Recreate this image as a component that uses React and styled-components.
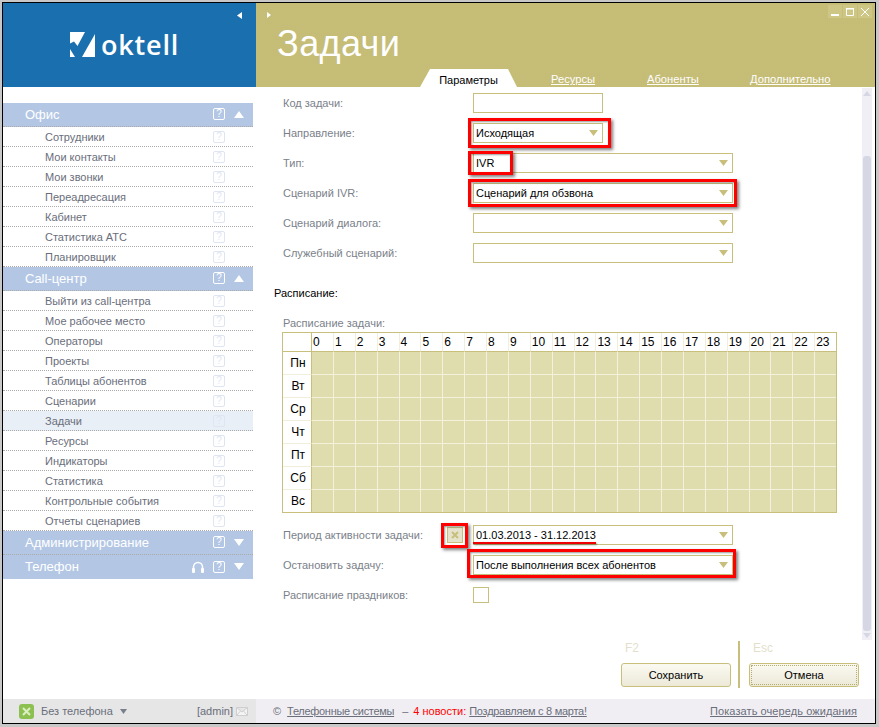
import React from "react";
import styled, { createGlobalStyle } from "styled-components";

const Global = createGlobalStyle`
  html, body { margin: 0; padding: 0; background: #c8c8c8; }
  body { font-family: "Liberation Sans", Arial, sans-serif; font-size: 11px; }
`;
const Frame = styled.div`
  width: 879px; height: 727px; box-sizing: border-box; padding: 2px 3px 3px 2px; overflow: hidden;
`;
const Win = styled.div`
  width: 874px; height: 722px; box-sizing: border-box; border: 1px solid #000; background: #fff;
  display: grid; grid-template-columns: 253px 1fr; grid-template-rows: 84px 1fr 24px;
`;
const Brand = styled.div`
  background: #1a6fae; position: relative; display: flex; align-items: center; padding: 0 0 2px 67px; box-sizing: border-box;
`;
const LogoText = styled.span`
  color: #fff; font: 600 27px "Open Sans", "Liberation Sans", sans-serif; letter-spacing: 0.8px; margin-left: 6px; line-height: 1;
`;
const Collapse = styled.svg`
  position: absolute; right: 14px; top: 9px;
`;
const Head = styled.div`
  background: #c5bc75; position: relative; padding-left: 21px;
  background-image: linear-gradient(45deg, rgba(255,255,255,.03) 25%, transparent 25%);
  background-size: 2px 2px;
`;
const Title = styled.div`
  color: #fff; font-size: 36px; line-height: 40px; padding-top: 21px; letter-spacing: .4px;
`;
const ExpandIcon = styled.svg`
  position: absolute; left: 11px; top: 9px;
`;
const WinBtns = styled.div`
  position: absolute; right: 3px; top: 2px; display: flex; gap: 1px;
`;
const WinBtn = styled.div`
  width: 14px; height: 13px; background: #cec684; display: flex; align-items: center; justify-content: center;
`;
const Tabs = styled.div`
  position: absolute; left: 0; right: 0; bottom: 0; height: 18px;
`;
const ActiveTab = styled.div`
  position: absolute; left: 164px; bottom: 0; width: 97px; height: 18px;
  background: #fff; clip-path: polygon(10px 0, 88px 0, 97px 100%, 0 100%);
  display: flex; align-items: center; justify-content: center; font-size: 11px; color: #000; padding-top: 3px; box-sizing: border-box;
`;
const TabLink = styled.a`
  position: absolute; left: ${p => p.$x}px; bottom: 0; color: #fff; font-size: 11.2px; text-decoration: underline; line-height: 15px;
`;
const Side = styled.div`
  padding: 16px 3px 0 0; background: #fff;
`;
const Section = styled.div`
  height: 24px; background: #b3c7e5; border-bottom: 1px dotted #aaa; box-sizing: border-box; color: #fff; font-size: 13px;
  display: flex; align-items: center; padding: 0 9px 1px 22px;
  & > span:first-child { flex: 1; }
  &:last-child { border-bottom: 0; }
`;
const Icons = styled.div`
  display: flex; align-items: center; gap: 9px;
`;
const Help = styled.span`
  width: 10px; height: 10px; border: 1px solid ${p => p.$light ? "#dfe6f3" : "#fff"}; border-radius: 2px;
  font-size: 10px; line-height: 10px; text-align: center;
  color: ${p => p.$light ? "#dfe6f3" : "#fff"}; display: inline-block; box-sizing: content-box; flex: none;
`;
const Tri = styled.svg`
  display: block;
`;
const Item = styled.div`
  height: 20px; box-sizing: border-box; border-bottom: 1px dotted #aaa;
  display: flex; align-items: center; justify-content: space-between; padding: 0 28px 0 42px;
  color: #6a6e7b; background: ${p => p.$active ? "#e9eff7" : "#fff"};
`;
const Main = styled.div`
  display: grid; grid-template-columns: 1fr 13px; min-height: 0; background: #fff; padding-left: 3px;
`;
const Form = styled.div`
  padding: 6px 0 0 15px; position: relative;
`;
const Row = styled.div`
  display: flex; align-items: center; height: 20px; margin-bottom: 10px; color: #7b7f8a; padding-left: 9px;
`;
const Label = styled.div`
  width: 190px; flex: none;
`;
const FieldWrap = styled.div`
  position: relative; flex: none; width: ${p => p.$w}px;
`;
const Input = styled.div`
  box-sizing: border-box; height: 20px; border: 1px solid #c8bf7c; background: #fff; width: 100%; color: #000;
  padding-left: 2px; line-height: 18px; position: relative; font-size: 11px;
`;
const Arrow = styled.svg`
  position: absolute; right: 4px; top: 6px;
`;
const Mark = styled.div`
  position: absolute; left: ${p => p.$l}px; top: ${p => p.$t}px; width: ${p => p.$w}px; height: ${p => p.$h}px;
  border: 3px solid #f00; box-sizing: border-box; pointer-events: none;
  box-shadow: 2px 2px 3px rgba(0,0,0,.5), inset 1px 1px 2px rgba(0,0,0,.4);
`;
const Underline = styled.div`
  position: absolute; left: -1px; top: 16px; width: 123px; height: 2px; background: #e00; box-shadow: 1px 1px 2px rgba(0,0,0,.4);
`;
const Heading = styled.div`
  color: #000; margin: 23px 0 0 0; height: 15px; line-height: 15px;
`;
const SubLabel = styled.div`
  color: #7b7f8a; margin: 15px 0 1px 9px; height: 15px; line-height: 15px;
`;
const Grid = styled.div`
  margin-left: 8px; width: 555px; height: 181px; box-sizing: border-box; border: 1px solid #c8bf7c;
  display: grid; grid-template-columns: 29px repeat(24, 21.875px); grid-template-rows: 19px repeat(7, 23px); background: #fff; overflow: hidden;
`;
const Corner = styled.div`
  border-right: 1px solid #c8bf7c; border-bottom: 1px solid #c8bf7c;
`;
const Hour = styled.div`
  border-bottom: 1px solid #c8bf7c; border-right: 1px solid #f1efdb; padding-left: 1px; color: #000; font-size: 12px; line-height: 18px; white-space: nowrap; box-sizing: border-box;
`;
const Day = styled.div`
  border-right: 1px solid #c8bf7c; border-bottom: 1px solid #f1efdb; display: flex; align-items: center; justify-content: center; color: #000; font-size: 12px; padding-left: 2px; box-sizing: border-box;
`;
const Cell = styled.div`
  background: #dfdcae; border-right: 1px solid #f3f1dc; border-bottom: 1px solid #f3f1dc; box-sizing: border-box;
`;
const Gap = styled.div`
  height: 12px;
`;
const Check = styled.div`
  width: 16px; height: 16px; border: 1px solid #c8bf7c; box-sizing: border-box; background: #fff; position: relative;
  display: flex; align-items: center; justify-content: center;
`;
const CheckOn = styled(Check)`
  position: absolute; left: -26px; top: 2px; background: #e6e3cc; color: #c8bf7c;
`;
const Foot = styled.div`
  position: absolute; left: 0; right: 0; top: 554px; height: 50px;
`;
const Hotkey = styled.div`
  position: absolute; left: ${p => p.$x}px; top: 0; color: #e4dfcd; font-size: 12px;
`;
const Btn = styled.button`
  position: absolute; left: ${p => p.$x}px; top: 22px; width: 110px; height: 24px; border: 1px solid #c8bf7c; border-radius: 3px;
  background: linear-gradient(#fbfaf2, #ece9d8); color: #000; font: 11px "Liberation Sans", sans-serif; padding: 0;
  outline: ${p => p.$focus ? "1px dotted #b5ad6d" : "none"}; outline-offset: -3px;
`;
const Divider = styled.div`
  position: absolute; left: 479px; top: 0; width: 2px; height: 47px; background: #c8bf7c;
`;
const Scroll = styled.div`
  background: #f0eff5; width: 10px; position: relative; margin-top: 1px; margin-bottom: 59px;
`;
const Thumb = styled.div`
  position: absolute; left: 1px; right: 1px; top: 68px; bottom: 9px; background: #d5d8e4; border-radius: 3px;
`;
const ScrollBtn = styled.svg`
  position: absolute; left: 1px; ${p => p.$top ? "top: 3px" : "bottom: 2px"};
`;
const StatusL = styled.div`
  background: #e6e6e6; display: flex; align-items: center; padding: 0 8px 0 16px; color: #6a6e7b;
`;
const Green = styled.div`
  width: 15px; height: 15px; border-radius: 3px; background: #8cc152; color: #fff; display: flex; align-items: center; justify-content: center; margin-right: 7px;
`;
const Spacer = styled.div`
  flex: 1;
`;
const StatusR = styled.div`
  background: #f1eef3; display: flex; align-items: center; padding: 0 18px 0 17px; color: #6a6e7b;
`;
const FootLink = styled.a`
  color: #6a6e7b; text-decoration: underline; letter-spacing: ${p => p.$ls ?? 0}px; margin-right: ${p => p.$m ?? 0}px;
`;
const Copy = styled.span`
  margin-right: 6px;
`;
const Dash = styled.span`
  margin-right: 5px;
`;
const News = styled.span`
  color: #f00; margin-right: 3px;
`;
const StatusArrow = styled.svg`
  margin-left: 7px;
`;
const Mail = styled.svg`
  margin-left: 3px;
`;

const Q = ({ light }) => <Help $light={light}>?</Help>;
const TriUp = () => <Tri width="10" height="7" viewBox="0 0 10 7"><path d="M5 0L10 7H0z" fill="#fff" /></Tri>;
const TriDown = () => <Tri width="10" height="7" viewBox="0 0 10 7"><path d="M0 0h10L5 7z" fill="#fff" /></Tri>;
const Dd = () => <Arrow width="9" height="6" viewBox="0 0 9 6"><path d="M0 0h9L4.5 6z" fill="#c8bf7c" /></Arrow>;

const office = ["Сотрудники", "Мои контакты", "Мои звонки", "Переадресация", "Кабинет", "Статистика АТС", "Планировщик"];
const cc = ["Выйти из call-центра", "Мое рабочее место", "Операторы", "Проекты", "Таблицы абонентов", "Сценарии", "Задачи", "Ресурсы", "Индикаторы", "Статистика", "Контрольные события", "Отчеты сценариев"];
const days = ["Пн", "Вт", "Ср", "Чт", "Пт", "Сб", "Вс"];
const hours = Array.from({ length: 24 }, (_, i) => i);

export default function App() {
  return (
    <Frame>
      <Global />
      <Win>
        <Brand>
          <svg width="25" height="25" viewBox="0 0 25 25">
            <path d="M0 0H15L7.5 14L4 9.5L0 11.5z" fill="#fff" />
            <path d="M25 2V25H12z" fill="#fff" />
            <path d="M0 17V25H5z" fill="#fff" />
          </svg>
          <LogoText>oktell</LogoText>
          <Collapse width="5" height="7" viewBox="0 0 5 7"><path d="M5 0V7L0 3.5z" fill="#fff" /></Collapse>
        </Brand>
        <Head>
          <ExpandIcon width="4" height="6" viewBox="0 0 4 6"><path d="M0 0V6L4 3z" fill="#fff" /></ExpandIcon>
          <WinBtns>
            <WinBtn><svg width="8" height="8" viewBox="0 0 8 8"><path d="M0 6h8v2H0z" fill="#fff" /></svg></WinBtn>
            <WinBtn><svg width="8" height="8" viewBox="0 0 8 8"><path d="M.5.5h7v7h-7z" fill="none" stroke="#fff" /><path d="M0 0h8v1.5H0z" fill="#fff" /></svg></WinBtn>
            <WinBtn><svg width="8" height="8" viewBox="0 0 8 8"><path d="M0 0L8 8M8 0L0 8" stroke="#fff" fill="none" /></svg></WinBtn>
          </WinBtns>
          <Title>Задачи</Title>
          <Tabs>
            <ActiveTab>Параметры</ActiveTab>
            <TabLink $x={295}>Ресурсы</TabLink>
            <TabLink $x={391}>Абоненты</TabLink>
            <TabLink $x={494}>Дополнительно</TabLink>
          </Tabs>
        </Head>
        <Side>
          <Section><span>Офис</span><Icons><Q /><TriUp /></Icons></Section>
          {office.map(t => <Item key={t}>{t}<Q light /></Item>)}
          <Section><span>Call-центр</span><Icons><Q /><TriUp /></Icons></Section>
          {cc.map(t => <Item key={t} $active={t === "Задачи"}>{t}<Q light /></Item>)}
          <Section><span>Администрирование</span><Icons><Q /><TriDown /></Icons></Section>
          <Section>
            <span>Телефон</span>
            <Icons>
              <svg width="12" height="12" viewBox="0 0 12 12"><path d="M1.5 8V6a4.5 4.5 0 0 1 9 0v2" fill="none" stroke="#fff" strokeWidth="1.5" /><rect x="0" y="7" width="3" height="5" rx="1" fill="#fff" /><rect x="9" y="7" width="3" height="5" rx="1" fill="#fff" /></svg>
              <Q /><TriDown />
            </Icons>
          </Section>
        </Side>
        <Main>
          <Form>
            <Row><Label>Код задачи:</Label><FieldWrap $w={130}><Input /></FieldWrap></Row>
            <Row><Label>Направление:</Label><FieldWrap $w={130}><Input>Исходящая<Dd /></Input><Mark $l={-5} $t={-5} $w={143} $h={30} /></FieldWrap></Row>
            <Row><Label>Тип:</Label><FieldWrap $w={260}><Input>IVR<Dd /></Input><Mark $l={-5} $t={-2} $w={45} $h={24} /></FieldWrap></Row>
            <Row><Label>Сценарий IVR:</Label><FieldWrap $w={260}><Input>Сценарий для обзвона<Dd /></Input><Mark $l={-5} $t={-4} $w={269} $h={28} /></FieldWrap></Row>
            <Row><Label>Сценарий диалога:</Label><FieldWrap $w={260}><Input><Dd /></Input></FieldWrap></Row>
            <Row><Label>Служебный сценарий:</Label><FieldWrap $w={260}><Input><Dd /></Input></FieldWrap></Row>
            <Heading>Расписание:</Heading>
            <SubLabel>Расписание задачи:</SubLabel>
            <Grid>
              <Corner />
              {hours.map(h => <Hour key={h}>{h}</Hour>)}
              {days.map(d => (
                <React.Fragment key={d}>
                  <Day>{d}</Day>
                  {hours.map(h => <Cell key={h} />)}
                </React.Fragment>
              ))}
            </Grid>
            <Gap />
            <Row>
              <Label>Период активности задачи:</Label>
              <FieldWrap $w={260}>
                <CheckOn><svg width="8" height="8" viewBox="0 0 8 8"><path d="M1 1L7 7M7 1L1 7" stroke="#c8bf7c" strokeWidth="2" /></svg></CheckOn>
                <Mark $l={-32} $t={-2} $w={27} $h={25} />
                <Input>01.03.2013 - 31.12.2013<Dd /><Underline /></Input>
              </FieldWrap>
            </Row>
            <Row>
              <Label>Остановить задачу:</Label>
              <FieldWrap $w={260}><Input>После выполнения всех абонентов<Dd /></Input><Mark $l={-6} $t={-6} $w={269} $h={29} /></FieldWrap>
            </Row>
            <Row>
              <Label>Расписание праздников:</Label>
              <Check />
            </Row>
            <Foot>
              <Hotkey $x={366}>F2</Hotkey>
              <Btn $x={362}>Сохранить</Btn>
              <Divider />
              <Hotkey $x={494}>Esc</Hotkey>
              <Btn $x={490} $focus>Отмена</Btn>
            </Foot>
          </Form>
          <Scroll>
            <ScrollBtn $top width="8" height="5" viewBox="0 0 8 5"><path d="M4 0L8 5H0z" fill="#d5d8e4" /></ScrollBtn>
            <Thumb />
            <ScrollBtn width="8" height="5" viewBox="0 0 8 5"><path d="M0 0h8L4 5z" fill="#d5d8e4" /></ScrollBtn>
          </Scroll>
        </Main>
        <StatusL>
          <Green><svg width="9" height="9" viewBox="0 0 9 9"><path d="M1 1L8 8M8 1L1 8" stroke="#dcefc4" strokeWidth="2" /></svg></Green>
          Без телефона
          <StatusArrow width="7" height="5" viewBox="0 0 7 5"><path d="M0 0h7L3.5 5z" fill="#7b7f8a" /></StatusArrow>
          <Spacer />
          [admin]
          <Mail width="12" height="9" viewBox="0 0 12 9"><path d="M.5.5h11v8H.5zM.5.5L6 5L11.5.5M.5 8.5L4.5 4M11.5 8.5L7.5 4" fill="#f4f4f4" stroke="#cfcfcf" /></Mail>
        </StatusL>
        <StatusR>
          <Copy>©</Copy>
          <FootLink $ls={-0.3} $m={8}>Телефонные системы</FootLink>
          <Dash>–</Dash>
          <News>4 новости:</News>
          <FootLink $ls={-0.27}>Поздравляем с 8 марта!</FootLink>
          <Spacer />
          <FootLink $ls={0.08}>Показать очередь ожидания</FootLink>
        </StatusR>
      </Win>
    </Frame>
  );
}
